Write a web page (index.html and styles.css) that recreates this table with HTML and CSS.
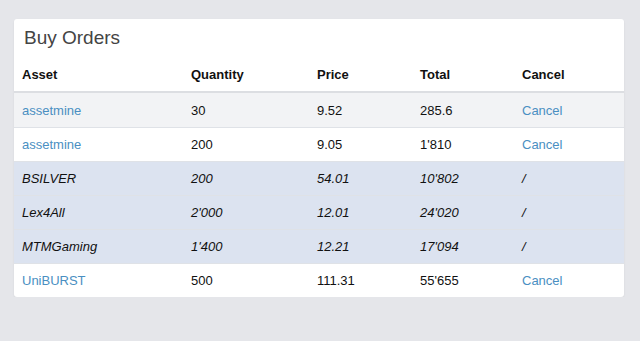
FILE: index.html
```html
<!DOCTYPE html>
<html lang="en">
<head>
    <meta charset="UTF-8">
    <title>Buy Orders</title>
    <link rel="stylesheet" href="styles.css">
</head>
<body>
<div class="card">
    <h2 class="card-title">Buy Orders</h2>
    <table class="orders">
        <thead>
        <tr>
            <th class="col-asset">Asset</th>
            <th class="col-qty">Quantity</th>
            <th class="col-price">Price</th>
            <th class="col-total">Total</th>
            <th>Cancel</th>
        </tr>
        </thead>
        <tbody>
        <tr class="own shaded">
            <td><a href="#">assetmine</a></td>
            <td>30</td>
            <td>9.52</td>
            <td>285.6</td>
            <td><a href="#">Cancel</a></td>
        </tr>
        <tr class="own">
            <td><a href="#">assetmine</a></td>
            <td>200</td>
            <td>9.05</td>
            <td>1'810</td>
            <td><a href="#">Cancel</a></td>
        </tr>
        <tr class="other">
            <td>BSILVER</td>
            <td>200</td>
            <td>54.01</td>
            <td>10'802</td>
            <td>/</td>
        </tr>
        <tr class="other">
            <td>Lex4All</td>
            <td>2'000</td>
            <td>12.01</td>
            <td>24'020</td>
            <td>/</td>
        </tr>
        <tr class="other">
            <td>MTMGaming</td>
            <td>1'400</td>
            <td>12.21</td>
            <td>17'094</td>
            <td>/</td>
        </tr>
        <tr class="own">
            <td><a href="#">UniBURST</a></td>
            <td>500</td>
            <td>111.31</td>
            <td>55'655</td>
            <td><a href="#">Cancel</a></td>
        </tr>
        </tbody>
    </table>
</div>
</body>
</html>
```

FILE: styles.css
```css
body {
    font-family: "Liberation Sans", Arial, sans-serif;
    background-color: #e5e6ea;
    margin: 0;
    padding: 19px 16px 0 14px;
    color: #111;
}

.card {
    width: 610px;
    background-color: #fff;
    border-radius: 3px;
    box-shadow: 0 1px 2px rgba(0, 0, 0, 0.08);
    overflow: hidden;
}

.card-title {
    margin: 0;
    padding: 7px 10px 8px 10px;
    font-size: 19px;
    line-height: 24px;
    font-weight: normal;
    color: #444;
}

.orders {
    width: 100%;
    border-collapse: collapse;
    font-size: 13px;
}

.orders th {
    text-align: left;
    font-weight: bold;
    height: 33px;
    padding: 0 8px;
    border-bottom: 2px solid #dcdee2;
    color: #111;
}

.orders td {
    height: 33px;
    padding: 0 8px;
    border-top: 1px solid #dfe2e7;
}

.orders tbody tr:first-child td {
    border-top: none;
    height: 34px;
}

.col-asset {
    width: 153px;
}

.col-qty {
    width: 110px;
}

.col-price {
    width: 87px;
}

.col-total {
    width: 86px;
}

.orders a {
    color: #4a8fc2;
    text-decoration: none;
}

.shaded {
    background-color: #f2f3f5;
}

.other {
    background-color: #dce3f0;
    font-style: italic;
}
```
